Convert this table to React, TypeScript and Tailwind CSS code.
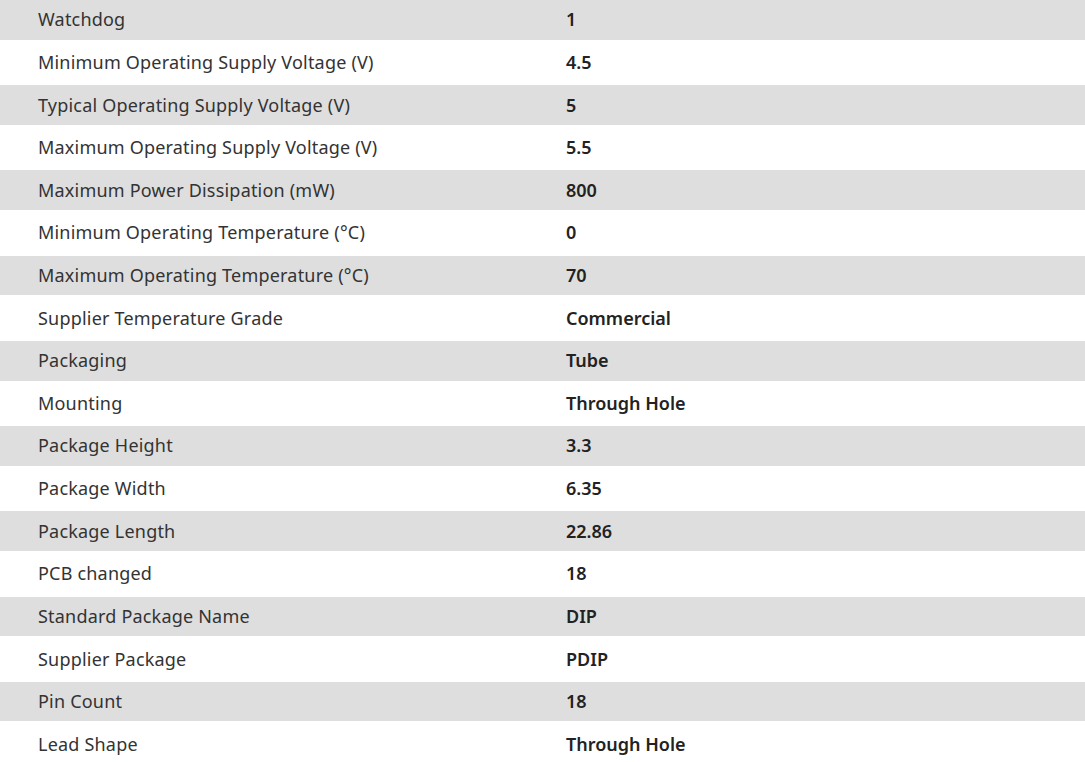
const specs: [string, string][] = [
  ["Watchdog", "1"],
  ["Minimum Operating Supply Voltage (V)", "4.5"],
  ["Typical Operating Supply Voltage (V)", "5"],
  ["Maximum Operating Supply Voltage (V)", "5.5"],
  ["Maximum Power Dissipation (mW)", "800"],
  ["Minimum Operating Temperature (°C)", "0"],
  ["Maximum Operating Temperature (°C)", "70"],
  ["Supplier Temperature Grade", "Commercial"],
  ["Packaging", "Tube"],
  ["Mounting", "Through Hole"],
  ["Package Height", "3.3"],
  ["Package Width", "6.35"],
  ["Package Length", "22.86"],
  ["PCB changed", "18"],
  ["Standard Package Name", "DIP"],
  ["Supplier Package", "PDIP"],
  ["Pin Count", "18"],
  ["Lead Shape", "Through Hole"],
]

export default function App() {
  return (
    <div className="w-[1085px] bg-white font-['Noto_Sans',sans-serif] text-[18px]">
      {specs.map(([label, value], i) => (
        <div
          key={label}
          className={
            i % 2 === 0
              ? "flex items-center h-[39.6px] bg-[#dedede]"
              : "flex items-center h-[45.65px] bg-white"
          }
        >
          <div className="w-[566px] pl-[38px] text-[#333333] tracking-[0.2px]">{label}</div>
          <div className="font-semibold text-[#222222]">{value}</div>
        </div>
      ))}
    </div>
  )
}
